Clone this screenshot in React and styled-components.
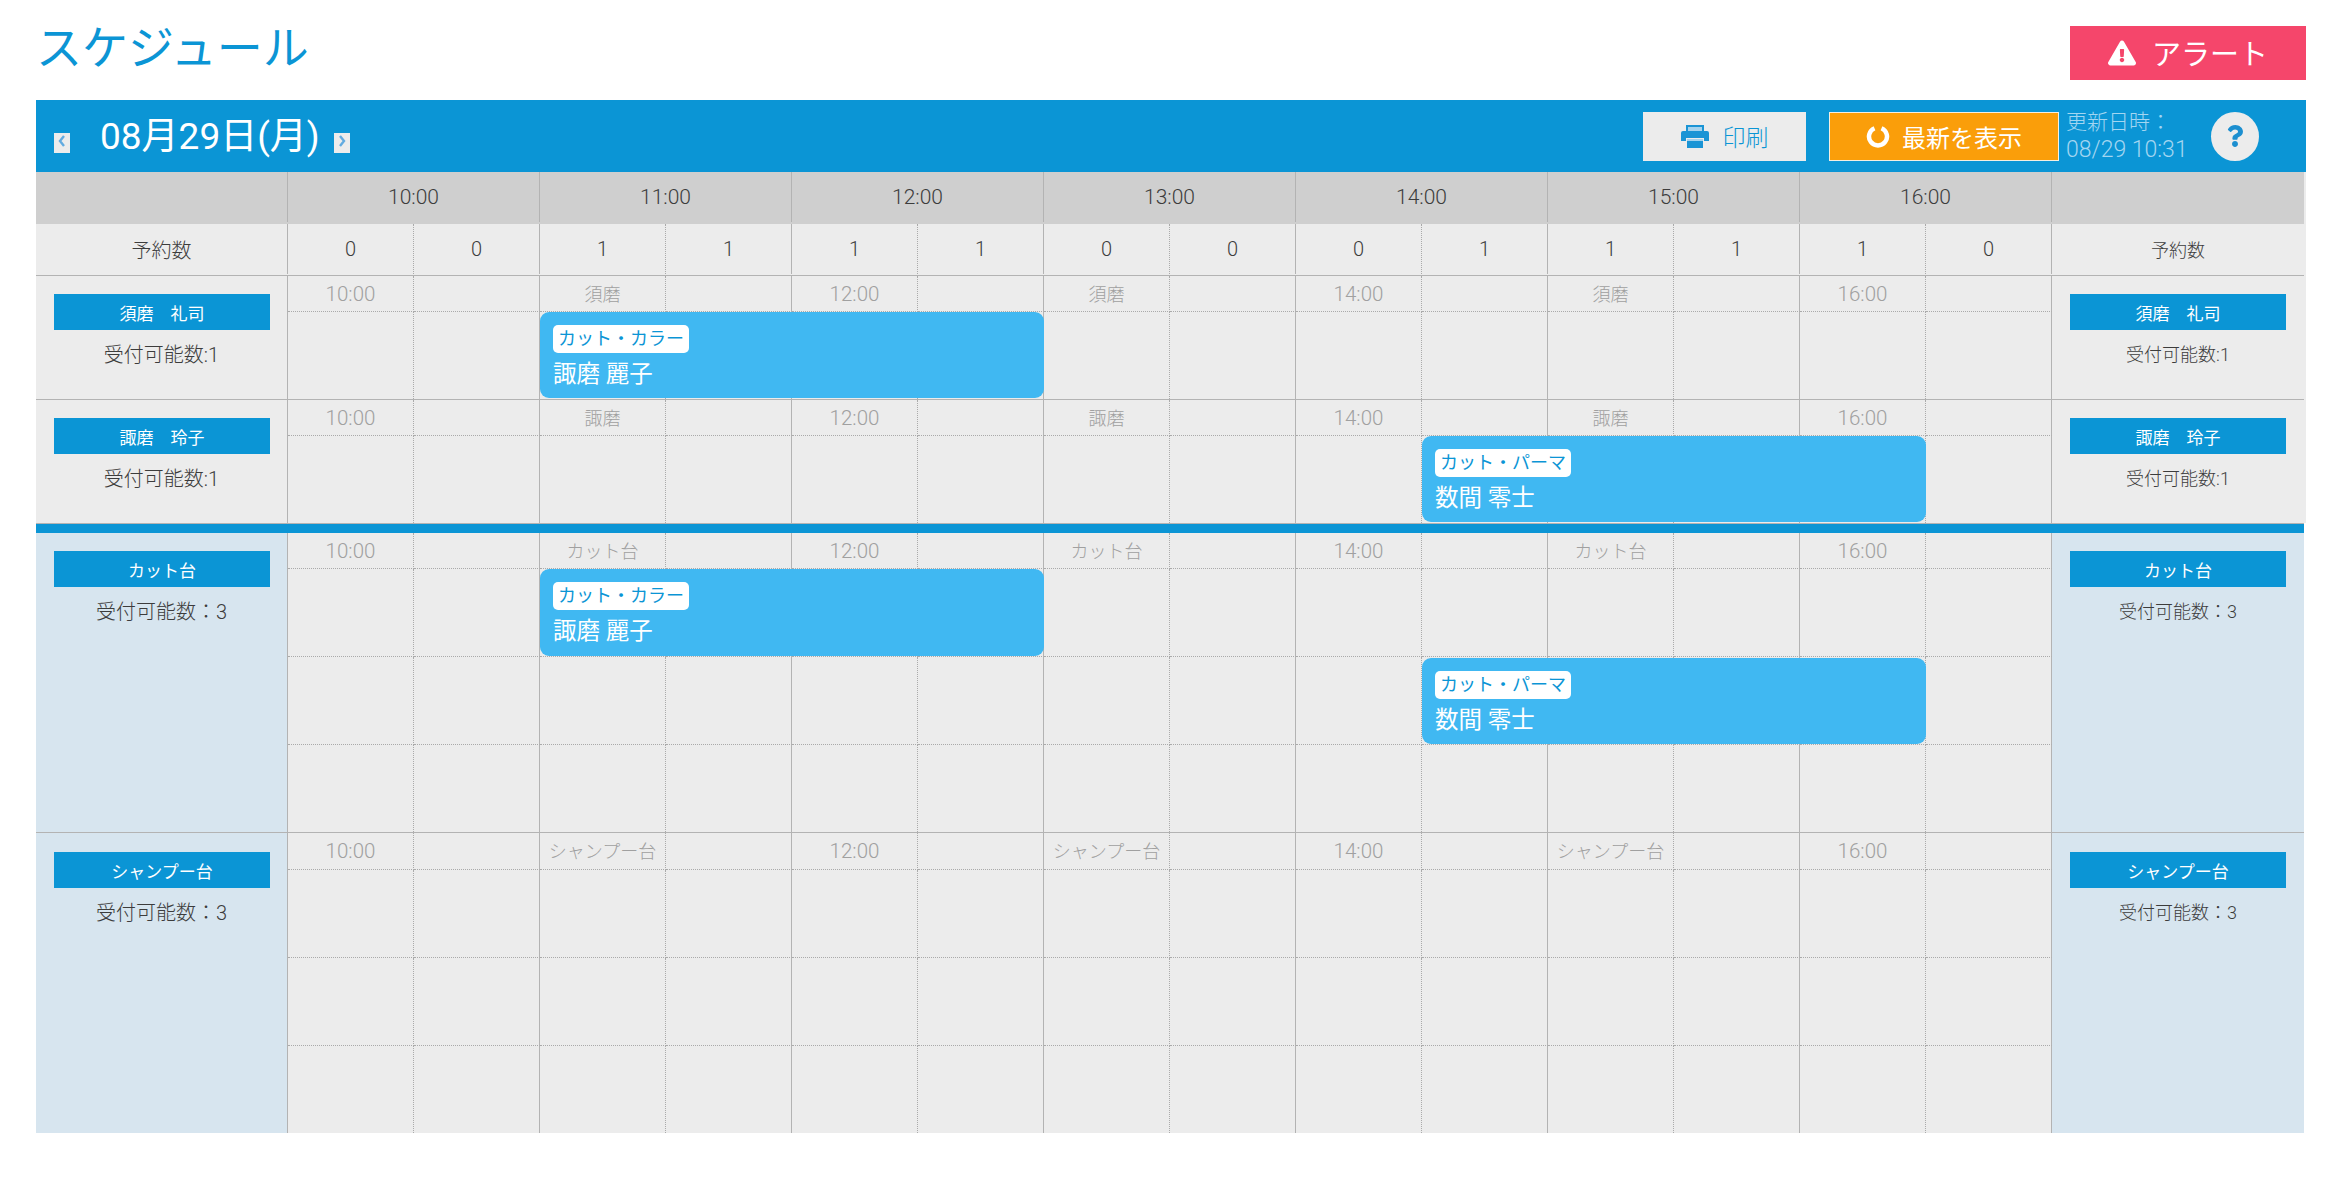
import React from 'react'
import styled, { createGlobalStyle } from 'styled-components'
import { FaExclamationTriangle, FaQuestion } from 'react-icons/fa'

const BLUE = '#0b95d5'
const LINE = '#b3b3b3'

const GlobalStyle = createGlobalStyle`
  html, body { margin: 0; background: #fff; }
  body { font-family: Roboto, "Noto Sans CJK JP", sans-serif; font-weight: 300; color: #3c3c3c; }
  * { box-sizing: border-box; }
`

const Page = styled.div`
  width: 2342px;
  padding: 0 36px;
`
const TitleBar = styled.div`
  height: 100px;
  display: flex;
  justify-content: space-between;
  align-items: flex-start;
`
const Title = styled.h1`
  margin: 20px 0 0;
  font-size: 46px;
  line-height: 56px;
  font-weight: 400;
  color: ${BLUE};
`
const AlertButton = styled.div`
  width: 236px;
  height: 54px;
  margin-top: 26px;
  display: flex;
  align-items: center;
  justify-content: center;
  gap: 16px;
  background: #f5466b;
  color: #fff;
  font-size: 29px;
  font-weight: 400;
  span { margin-top: -2px; }
  svg { font-size: 28px; }
`
const Toolbar = styled.div`
  height: 72px;
  width: 2270px;
  background: ${BLUE};
  display: flex;
  align-items: center;
  padding: 0 47px 0 18px;
`
const DateNav = styled.div`
  display: flex;
  align-items: center;
  flex: 1;
`
const ArrowBox = styled.span`
  width: 16px;
  height: 20px;
  margin-top: 14px;
  background: #ececec;
  display: flex;
  justify-content: center;
  padding-top: 2px;
`
const DateText = styled.div`
  color: #fff;
  font-size: 37px;
  font-weight: 400;
  line-height: 44px;
  margin: 2px 14px 0 30px;
`
const PrintButton = styled.div`
  width: 163px;
  height: 49px;
  background: #ececec;
  color: ${BLUE};
  font-size: 23px;
  display: flex;
  align-items: center;
  justify-content: center;
  gap: 14px;
`
const RefreshButton = styled.div`
  width: 230px;
  height: 49px;
  margin-left: 23px;
  background: #fa9e0a;
  border: 1px solid #f4efe2;
  color: #fff;
  font-size: 24px;
  font-weight: 400;
  display: flex;
  align-items: center;
  justify-content: center;
  gap: 12px;
`
const UpdatedAt = styled.div`
  width: 145px;
  margin-left: 7px;
  color: #a3d6f1;
  font-size: 21px;
  line-height: 27px;
`
const UpdatedTime = styled.span`
  font-size: 23px;
`
const HelpButton = styled.div`
  width: 48px;
  height: 49px;
  border-radius: 50%;
  background: #ececec;
  color: #1c8fd0;
  display: flex;
  align-items: center;
  justify-content: center;
  svg { font-size: 22px; }
`

const TopPart = styled.div`
  width: 2270px;
  background: #ececec;
`
const Table = styled.div`
  width: 2268px;
`
const TimeRow = styled.div`
  height: 52px;
  background: #cfcfcf;
  display: grid;
  grid-template-columns: repeat(9, 252px);
`
const TimeCell = styled.div`
  height: 50px;
  display: flex;
  align-items: center;
  justify-content: center;
  font-size: 21px;
  border-right: ${p => (p.$last ? 'none' : `1px solid ${LINE}`)};
`
const CountRow = styled.div`
  height: 51px;
  display: grid;
  grid-template-columns: 252px repeat(14, 126px) 252px;
`
const CountLabel = styled.div`
  height: 50px;
  display: flex;
  align-items: center;
  justify-content: center;
  font-size: ${p => p.$size}px;
  border-right: ${p => (p.$line ? `1px solid ${LINE}` : 'none')};
`
const CountCell = styled.div`
  height: 50px;
  display: flex;
  align-items: center;
  justify-content: center;
  font-size: 20px;
  border-right: 1px ${p => (p.$half ? `dotted #aaa` : `solid ${LINE}`)};
`

const ResourceRow = styled.div`
  display: grid;
  grid-template-columns: 252px 1764px 252px;
  border-top: ${p => (p.$line ? `1px solid ${LINE}` : 'none')};
`
const Side = styled.div`
  padding-top: ${p => p.$top}px;
  background: ${p => (p.$tint ? '#d7e5ef' : 'transparent')};
  border-right: ${p => (p.$line ? `1px solid ${LINE}` : 'none')};
`
const NameTag = styled.div`
  width: 216px;
  height: 36px;
  margin-left: 18px;
  padding-top: 4px;
  background: ${BLUE};
  color: #fff;
  font-size: 17px;
  font-weight: 400;
  line-height: 32px;
  text-align: center;
  white-space: pre;
`
const Capacity = styled.div`
  margin-top: 11px;
  font-size: ${p => p.$size}px;
  line-height: 28px;
  text-align: center;
`
const Lanes = styled.div`
  display: flex;
  flex-direction: column;
  background: #ececec;
`
const Lane = styled.div`
  height: ${p => p.$h}px;
  display: grid;
  grid-template-columns: repeat(14, 126px);
  grid-template-rows: 1fr;
`
const Slot = styled.div`
  grid-row: 1;
  grid-column: ${p => p.$col};
  display: flex;
  align-items: center;
  justify-content: center;
  padding-bottom: ${p => (p.$size === 18 ? 2 : 0)}px;
  color: #a0a0a0;
  font-size: ${p => p.$size || 18}px;
  white-space: nowrap;
  border-right: 1px ${p => (p.$col % 2 ? `dotted #aaa` : `solid ${LINE}`)};
  border-bottom: ${p => (p.$ruled ? '1px dotted #aaa' : 'none')};
`
const Booking = styled.div`
  grid-row: 1;
  grid-column: ${p => p.$col} / span ${p => p.$span};
  margin: ${p => p.$inset}px 0 1px;
  padding: 13px 13px 0;
  border-radius: 9px;
  background: #40b8f2;
  z-index: 1;
`
const BookingType = styled.div`
  display: inline-block;
  height: 28px;
  padding: 0 5px;
  border-radius: 5px;
  background: #fff;
  color: ${BLUE};
  font-size: 18px;
  font-weight: 400;
  line-height: 28px;
  vertical-align: top;
`
const BookingName = styled.div`
  margin-top: 6px;
  color: #fff;
  font-size: 23.5px;
  font-weight: 400;
  line-height: 30px;
`
const Divider = styled.div`
  height: 10px;
  border-top: 1px solid ${LINE};
  background: ${BLUE};
`

const PrinterIcon = () => (
  <svg width="28" height="24" viewBox="0 0 28 24">
    <path d="M5 7V1h18v6h-2V3H7v4z" fill="#1a94d5" />
    <rect x="7" y="3" width="14" height="4" fill="#a5d3ee" />
    <path d="M2 7h24a2 2 0 0 1 2 2v8h-5v-3H5v3H0V9a2 2 0 0 1 2-2z" fill="#1a94d5" />
    <rect x="6" y="15" width="16" height="9" fill="#1a94d5" />
    <rect x="6" y="15" width="16" height="2" fill="#a5d3ee" />
  </svg>
)
const ReloadIcon = () => (
  <svg width="24" height="24" viewBox="0 0 24 24" fill="none">
    <path d="M15.5 4.2a9 9 0 1 1-7 0" stroke="#fff" strokeWidth="4.5" />
  </svg>
)
const Arrow = ({ right }) => (
  <svg width="8" height="12" viewBox="0 0 8 12" fill="none">
    <path d={right ? 'M2 1l4 5-4 5' : 'M6 1L2 6l4 5'} stroke="#62abe0" strokeWidth="2.4" />
  </svg>
)

const HOURS = ['10:00', '11:00', '12:00', '13:00', '14:00', '15:00', '16:00']
const COUNTS = [0, 0, 1, 1, 1, 1, 0, 0, 0, 1, 1, 1, 1, 0]
const COLS = Array.from({ length: 14 }, (_, i) => i + 1)

const labelFor = (col, name) => {
  if (col % 2 === 0) return null
  if (col % 4 === 1) return { text: `${10 + (col - 1) / 2}:00`, size: 20.5 }
  return { text: name, size: 18 }
}

const Row = ({ name, shortName, capLeft, capRight, tint, line, labelH, lanes, top }) => (
  <ResourceRow $line={line}>
    <Side $tint={tint} $line $top={top}>
      <NameTag>{name}</NameTag>
      <Capacity $size={20}>{capLeft}</Capacity>
    </Side>
    <Lanes>
      <Lane $h={labelH}>
        {COLS.map(col => {
          const label = labelFor(col, shortName)
          return (
            <Slot key={col} $col={col} $ruled $size={label && label.size}>
              {label && label.text}
            </Slot>
          )
        })}
      </Lane>
      {lanes.map((lane, i) => (
        <Lane key={i} $h={lane.h}>
          {COLS.map(col => (
            <Slot key={col} $col={col} $ruled={i < lanes.length - 1} />
          ))}
          {lane.booking && (
            <Booking $col={lane.booking.col} $span={4} $inset={lane.booking.inset || 0}>
              <BookingType>{lane.booking.type}</BookingType>
              <BookingName>{lane.booking.name}</BookingName>
            </Booking>
          )}
        </Lane>
      ))}
    </Lanes>
    <Side $tint={tint} $top={top}>
      <NameTag>{name}</NameTag>
      <Capacity $size={18}>{capRight}</Capacity>
    </Side>
  </ResourceRow>
)

const color = { type: 'カット・カラー', name: '諏磨 麗子', col: 3 }
const perm = { type: 'カット・パーマ', name: '数間 零士', col: 10 }

export default function App() {
  return (
    <Page>
      <GlobalStyle />
      <TitleBar>
        <Title>スケジュール</Title>
        <AlertButton>
          <FaExclamationTriangle />
          <span>アラート</span>
        </AlertButton>
      </TitleBar>
      <Toolbar>
        <DateNav>
          <ArrowBox><Arrow /></ArrowBox>
          <DateText>08月29日(月)</DateText>
          <ArrowBox><Arrow right /></ArrowBox>
        </DateNav>
        <PrintButton><PrinterIcon />印刷</PrintButton>
        <RefreshButton><ReloadIcon />最新を表示</RefreshButton>
        <UpdatedAt>更新日時：<br /><UpdatedTime>08/29 10:31</UpdatedTime></UpdatedAt>
        <HelpButton><FaQuestion /></HelpButton>
      </Toolbar>
      <TopPart>
        <Table>
          <TimeRow>
            <TimeCell />
            {HOURS.map(h => <TimeCell key={h}>{h}</TimeCell>)}
            <TimeCell $last />
          </TimeRow>
          <CountRow>
            <CountLabel $size={20} $line>予約数</CountLabel>
            {COUNTS.map((c, i) => <CountCell key={i} $half={i % 2 === 0}>{c}</CountCell>)}
            <CountLabel $size={18}>予約数</CountLabel>
          </CountRow>
          <Row
            line
            name={'須磨　礼司'}
            shortName="須磨"
            capLeft="受付可能数:1"
            capRight="受付可能数:1"
            labelH={36}
            top={18}
            lanes={[{ h: 87, booking: color }]}
          />
          <Row
            line
            name={'諏磨　玲子'}
            shortName="諏磨"
            capLeft="受付可能数:1"
            capRight="受付可能数:1"
            labelH={36}
            top={18}
            lanes={[{ h: 87, booking: perm }]}
          />
        </Table>
      </TopPart>
      <Table>
        <Divider />
        <Row
          tint
          name="カット台"
          shortName="カット台"
          capLeft="受付可能数：3"
          capRight="受付可能数：3"
          labelH={36}
          top={18}
          lanes={[
            { h: 88, booking: color },
            { h: 88, booking: { ...perm, inset: 1 } },
            { h: 87 },
          ]}
        />
        <Row
          tint
          line
          name="シャンプー台"
          shortName="シャンプー台"
          capLeft="受付可能数：3"
          capRight="受付可能数：3"
          labelH={37}
          top={19}
          lanes={[{ h: 88 }, { h: 88 }, { h: 87 }]}
        />
      </Table>
    </Page>
  )
}
